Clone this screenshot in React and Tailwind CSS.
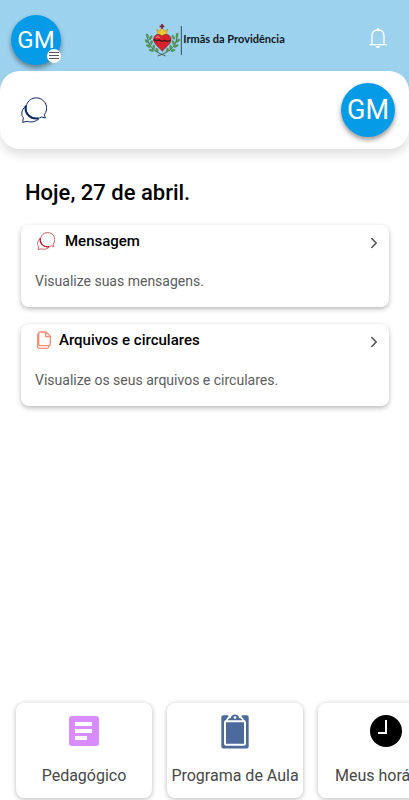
import { ChevronRight } from 'lucide-react';

const shortcuts = [
  { label: 'Pedagógico', Icon: ArticleIcon },
  { label: 'Programa de Aula', Icon: ClipboardIcon },
  { label: 'Meus horários', Icon: ClockIcon },
];

function BellIcon() {
  return (
    <svg viewBox="0 0 54 60" className="h-5 w-[18px]" fill="none" stroke="currentColor" strokeWidth="4">
      <path d="M9 49 V24 C9 12 16 6 27 6 C38 6 45 12 45 24 V49" />
      <path d="M1 50 H53" />
      <circle cx="27" cy="4" r="4" fill="currentColor" stroke="none" />
      <path d="M20 54 H34 Q33 60 27 60 Q21 60 20 54 Z" fill="currentColor" stroke="none" />
    </svg>
  );
}

function ChatIcon({ className, bold }) {
  return (
    <svg viewBox="0 0 78 78" className={className} fill="none" stroke="currentColor" strokeLinejoin="round">
      <path strokeWidth="3" d="M70 53 A31 31 0 1 0 62 60 L73 63 Z" />
      <path strokeWidth="3" d="M14 28 C0 38 0 55 7 62 L5 76 L18 73 C32 77 45 74 54 65" />
      <path strokeWidth={bold} d="M14 26 C10 48 27 68 52 64" />
    </svg>
  );
}

function FilesIcon({ className }) {
  return (
    <svg viewBox="0 0 42 54" className={className} fill="none" stroke="currentColor" strokeWidth="4">
      <path d="M9 3 H27 L40 16 V40 Q40 44 36 44 H9 Q5 44 5 40 V7 Q5 3 9 3 Z" />
      <path d="M26 3 V17 H40" />
      <path d="M5 7 Q2 8 2 11 V48 Q2 52 6 52 H31 Q35 52 36 45" />
    </svg>
  );
}

function ArticleIcon() {
  return (
    <svg viewBox="0 0 30 30" className="size-[30px]">
      <rect width="30" height="30" rx="3" fill="#d88cff" />
      <path fill="#fff" d="M6 6 H23 V10 H6 Z M6 13 H23 V17 H6 Z M6 20 H18 V24 H6 Z" />
    </svg>
  );
}

function ClipboardIcon() {
  return (
    <svg viewBox="0 0 84 104" className="h-[35px] w-7">
      <rect x="1" y="3" width="82" height="100" rx="6" fill="#4c6a9c" />
      <path fill="#fff" d="M22 0 H62 V14 H22 Z" />
      <rect x="12" y="21" width="60" height="71" rx="3" fill="none" stroke="#fff" strokeWidth="6" />
      <path
        d="M19 21 Q20 12 29 11 Q33 1 42 1 Q51 1 55 11 Q64 12 65 21 Z"
        fill="#4c6a9c"
      />
      <path d="M17 21 Q19 9 30 9 M67 21 Q65 9 54 9 M12 21 H72" fill="none" stroke="#fff" strokeWidth="5" />
      <circle cx="42" cy="10" r="4" fill="#fff" />
    </svg>
  );
}

function ClockIcon() {
  return (
    <svg viewBox="0 0 32 32" className="size-8">
      <circle cx="16" cy="16" r="16" fill="#000" />
      <path d="M16 5 V18 H8" fill="none" stroke="#fff" strokeWidth="2" />
    </svg>
  );
}

function SacredHeart() {
  return (
    <svg viewBox="18 30 114 105" className="h-[35px] w-[38px]" fill="none">
      {/* Branches */}
      <path d="M26 68 C24 98 40 118 80 132 M114 66 C116 98 98 118 56 132" stroke="#33502f" strokeWidth="2.5" />
      <g fill="#57a04a" stroke="#2f6b35" strokeWidth="1">
        <ellipse cx="25" cy="72" rx="3" ry="7" transform="rotate(-15 25 72)" />
        <ellipse cx="35" cy="77" rx="3" ry="7" transform="rotate(30 35 77)" />
        <ellipse cx="23" cy="88" rx="3" ry="7" transform="rotate(-50 23 88)" />
        <ellipse cx="37" cy="92" rx="3" ry="7" transform="rotate(20 37 92)" />
        <ellipse cx="28" cy="102" rx="3" ry="7" transform="rotate(-65 28 102)" />
        <ellipse cx="44" cy="105" rx="3" ry="7" transform="rotate(5 44 105)" />
        <ellipse cx="37" cy="115" rx="3" ry="7" transform="rotate(-75 37 115)" />
        <ellipse cx="54" cy="114" rx="3" ry="6" transform="rotate(-20 54 114)" />
        <ellipse cx="114" cy="70" rx="3" ry="7" transform="rotate(15 114 70)" />
        <ellipse cx="103" cy="76" rx="3" ry="7" transform="rotate(-30 103 76)" />
        <ellipse cx="117" cy="86" rx="3" ry="7" transform="rotate(50 117 86)" />
        <ellipse cx="103" cy="92" rx="3" ry="7" transform="rotate(-20 103 92)" />
        <ellipse cx="111" cy="102" rx="3" ry="7" transform="rotate(65 111 102)" />
        <ellipse cx="95" cy="106" rx="3" ry="7" transform="rotate(-5 95 106)" />
        <ellipse cx="102" cy="115" rx="3" ry="7" transform="rotate(75 102 115)" />
        <ellipse cx="85" cy="114" rx="3" ry="6" transform="rotate(20 85 114)" />
      </g>
      {/* Crown and cross */}
      <path d="M53 51 L61 58 L69 48 L77 58 L86 51 L81 72 H58 Z" fill="#f5c62d" stroke="#b98a1d" strokeWidth="2" />
      <path d="M69 36 V50 M62 43 H76" stroke="#7c1f35" strokeWidth="5" />
      {/* Heart */}
      <path
        d="M69 73 C60 62 44 68 44 82 C44 98 62 106 70 118 C78 106 96 98 96 82 C96 68 79 62 69 73 Z"
        fill="#d8232e"
        stroke="#74202a"
        strokeWidth="2"
      />
      <path d="M50 77 Q56 71 62 77" stroke="#f9a09a" strokeWidth="3" />
      <path d="M44 83 L52 86 L60 84 L68 88 L76 85 L84 88 L95 85" stroke="#3c1a1a" strokeWidth="4" />
      <path d="M127 42 V129" stroke="#35505f" strokeWidth="3" />
    </svg>
  );
}

function InfoCard({ icon, title, text }) {
  return (
    <a href="#" className="block rounded-lg bg-white px-3.5 pb-4 shadow-[0_2px_5px_rgba(0,0,0,0.28)]">
      <div className="flex h-8 items-center">
        {icon}
        <h2 className="flex-1 text-[15px] font-medium text-black">{title}</h2>
        <ChevronRight className="-mr-2 mt-1 size-[18px] text-[#505050]" strokeWidth={2} />
      </div>
      <p className="mt-3.5 text-sm leading-5 text-[#5c5c5c]">{text}</p>
    </a>
  );
}

export default function App() {
  return (
    <div className="flex min-h-screen flex-col bg-white font-[Roboto,sans-serif]">
      <div className="bg-[linear-gradient(#9dd2ef_100px,#fff_100px)]">
        <header className="flex h-[71px] items-center justify-between pl-[11px] pr-[22px] pt-2">
          <button aria-label="Menu" className="relative flex size-[50px] items-center justify-center rounded-full bg-[#069be7] text-2xl text-white shadow-[0_3px_5px_rgba(0,0,0,0.4)]">
            GM
            <span className="absolute bottom-0.5 right-0 flex size-3.5 flex-col items-center justify-center gap-0.5 rounded-full bg-white">
              <span className="h-px w-2.5 bg-[#555]" />
              <span className="h-px w-2.5 bg-[#555]" />
              <span className="h-px w-2.5 bg-[#555]" />
            </span>
          </button>
          <div className="flex items-center">
            <SacredHeart />
            <span className="font-[Lato,sans-serif] text-[11px] font-bold text-[#10161c]">Irmãs da Providência</span>
          </div>
          <button aria-label="Notificações" className="pb-1 text-white">
            <BellIcon />
          </button>
        </header>
        <div className="flex h-[78px] items-center justify-between rounded-[20px] bg-white pl-[21px] pr-3.5 shadow-[0_6px_10px_rgba(0,0,0,0.12)]">
          <button aria-label="Mensagens" className="text-[#0f2a66]">
            <ChatIcon className="size-[26px]" bold="6" />
          </button>
          <button aria-label="Perfil" className="flex size-[54px] items-center justify-center rounded-full bg-[#069be7] text-[27px] text-white shadow-[0_3px_5px_rgba(0,0,0,0.4)]">
            GM
          </button>
        </div>
      </div>

      <main className="flex-1 pl-[21px] pr-5 pt-7">
        <h1 className="pl-1 text-[22px] leading-8 font-medium text-black">Hoje, 27 de abril.</h1>
        <div className="mt-4 space-y-[17px]">
          <InfoCard
            icon={<ChatIcon className="ml-0.5 mr-2.5 size-[18px] text-[#b3202c]" bold="5" />}
            title="Mensagem"
            text="Visualize suas mensagens."
          />
          <InfoCard
            icon={<FilesIcon className="ml-0.5 mr-2 h-[18px] w-3.5 text-[#ff8a70]" />}
            title="Arquivos e circulares"
            text="Visualize os seus arquivos e circulares."
          />
        </div>
      </main>

      <nav className="flex gap-[15px] overflow-x-auto px-4 pb-0.5 pt-2 [scrollbar-width:none]">
        {shortcuts.map(({ label, Icon }) => (
          <a
            key={label}
            href="#"
            className="flex h-[95px] w-[136px] shrink-0 flex-col items-center justify-between rounded-lg bg-white pb-3 pt-2.5 shadow-[0_1px_5px_rgba(0,0,0,0.28)]"
          >
            <span className="flex h-9 items-center">
              <Icon />
            </span>
            <span className="whitespace-nowrap text-base leading-5 text-[#484848]">{label}</span>
          </a>
        ))}
      </nav>
    </div>
  );
}
